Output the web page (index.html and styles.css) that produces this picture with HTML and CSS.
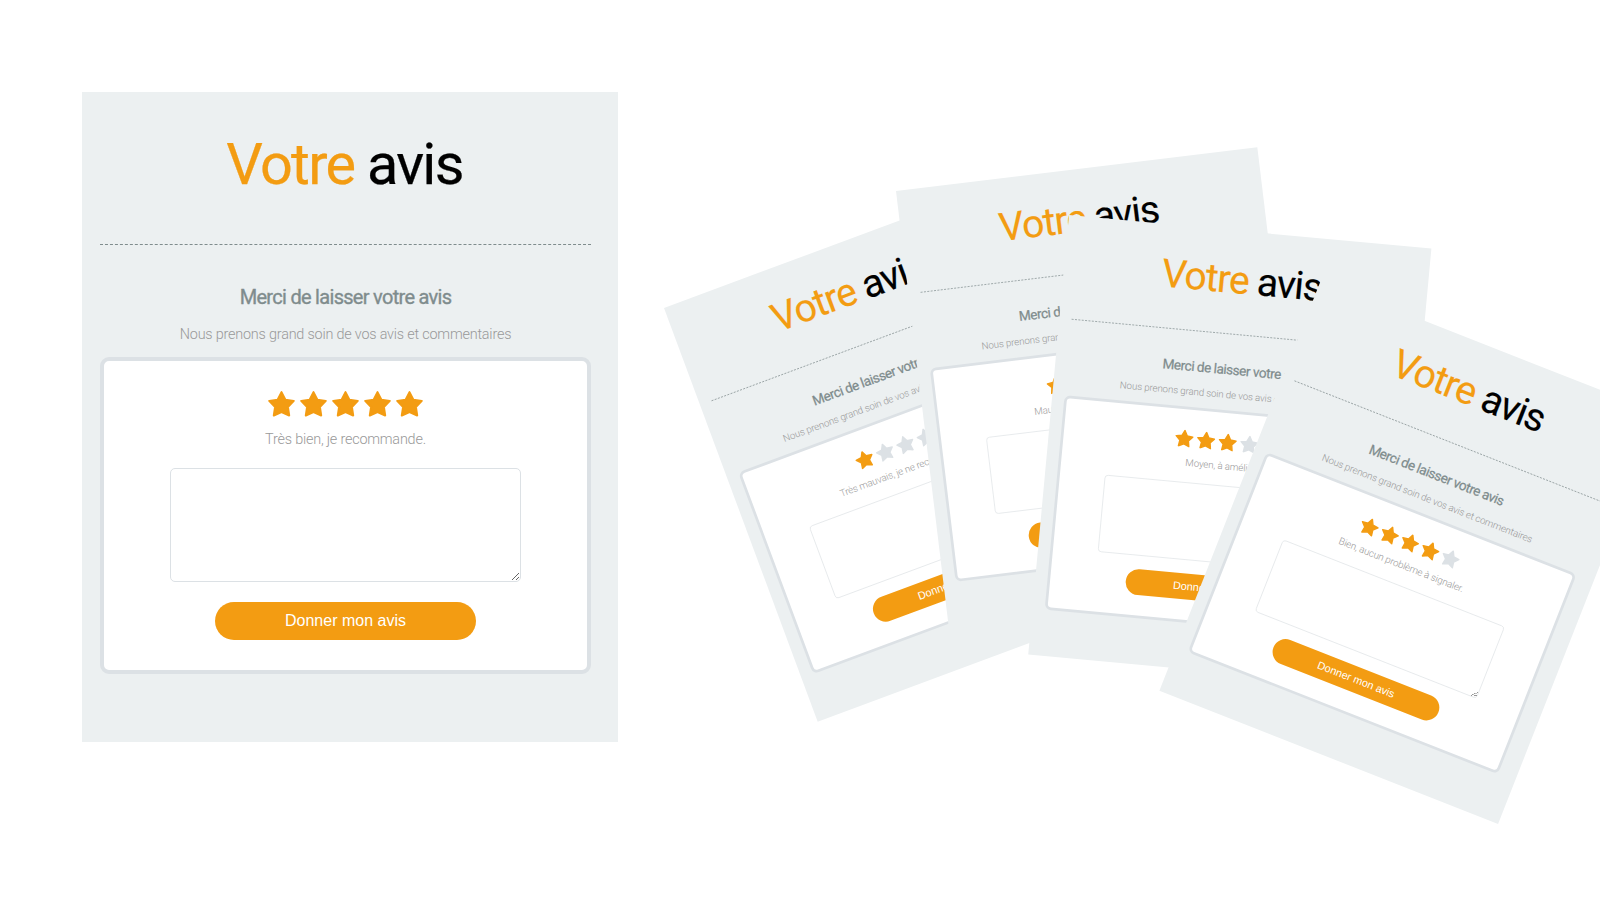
FILE: index.html
```html
<!DOCTYPE html>
<html lang="fr">
<head>
<meta charset="utf-8">
<title>Votre avis</title>
<link rel="stylesheet" href="styles.css">
</head>
<body>
<svg class="sprite" aria-hidden="true">
  <symbol id="star" viewBox="0 0 29 26">
    <path d="M14.5 1.1L18.4 8.7L26.8 9.9L20.9 16L22.2 24.5L14.5 21L6.8 24.5L8.1 16L2.2 9.9L10.6 8.7Z"/>
  </symbol>
</svg>
<main class="stage">
  <section class="card card-main">
    <h1 class="title"><span class="accent">Votre</span> avis</h1>
    <h2 class="subtitle">Merci de laisser votre avis</h2>
    <p class="note">Nous prenons grand soin de vos avis et commentaires</p>
    <form class="panel">
      <div class="stars">
        <svg class="star on"><use href="#star"/></svg><svg class="star on"><use href="#star"/></svg><svg class="star on"><use href="#star"/></svg><svg class="star on"><use href="#star"/></svg><svg class="star on"><use href="#star"/></svg>
      </div>
      <p class="rating">Très bien, je recommande.</p>
      <textarea class="comment"></textarea>
      <button class="submit" type="button">Donner mon avis</button>
    </form>
  </section>

  <section class="card fan fan-1">
    <h1 class="title"><span class="accent">Votre</span> avis</h1>
    <h2 class="subtitle">Merci de laisser votre avis</h2>
    <p class="note">Nous prenons grand soin de vos avis et commentaires</p>
    <form class="panel">
      <div class="stars">
        <svg class="star on"><use href="#star"/></svg><svg class="star"><use href="#star"/></svg><svg class="star"><use href="#star"/></svg><svg class="star"><use href="#star"/></svg><svg class="star"><use href="#star"/></svg>
      </div>
      <p class="rating">Très mauvais, je ne recommande pas.</p>
      <textarea class="comment"></textarea>
      <button class="submit" type="button">Donner mon avis</button>
    </form>
  </section>

  <section class="card fan fan-2">
    <h1 class="title"><span class="accent">Votre</span> avis</h1>
    <h2 class="subtitle">Merci de laisser votre avis</h2>
    <p class="note">Nous prenons grand soin de vos avis et commentaires</p>
    <form class="panel">
      <div class="stars">
        <svg class="star on"><use href="#star"/></svg><svg class="star on"><use href="#star"/></svg><svg class="star"><use href="#star"/></svg><svg class="star"><use href="#star"/></svg><svg class="star"><use href="#star"/></svg>
      </div>
      <p class="rating">Mauvais, je ne recommande pas.</p>
      <textarea class="comment"></textarea>
      <button class="submit" type="button">Donner mon avis</button>
    </form>
  </section>

  <section class="card fan fan-3">
    <h1 class="title"><span class="accent">Votre</span> avis</h1>
    <h2 class="subtitle">Merci de laisser votre avis</h2>
    <p class="note">Nous prenons grand soin de vos avis et commentaires</p>
    <form class="panel">
      <div class="stars">
        <svg class="star on"><use href="#star"/></svg><svg class="star on"><use href="#star"/></svg><svg class="star on"><use href="#star"/></svg><svg class="star"><use href="#star"/></svg><svg class="star"><use href="#star"/></svg>
      </div>
      <p class="rating">Moyen, à améliorer.</p>
      <textarea class="comment"></textarea>
      <button class="submit" type="button">Donner mon avis</button>
    </form>
  </section>

  <section class="card fan fan-4">
    <h1 class="title"><span class="accent">Votre</span> avis</h1>
    <h2 class="subtitle">Merci de laisser votre avis</h2>
    <p class="note">Nous prenons grand soin de vos avis et commentaires</p>
    <form class="panel">
      <div class="stars">
        <svg class="star on"><use href="#star"/></svg><svg class="star on"><use href="#star"/></svg><svg class="star on"><use href="#star"/></svg><svg class="star on"><use href="#star"/></svg><svg class="star"><use href="#star"/></svg>
      </div>
      <p class="rating">Bien, aucun problème à signaler.</p>
      <textarea class="comment"></textarea>
      <button class="submit" type="button">Donner mon avis</button>
    </form>
  </section>
</main>
</body>
</html>
```
FILE: styles.css
```css
* { box-sizing: border-box; }

body {
  margin: 0;
  background: #fff;
  font-family: Roboto, sans-serif;
}

.sprite { display: none; }

.stage {
  position: relative;
  width: 1600px;
  height: 900px;
  padding: 92px 0 0 82px;
  overflow: hidden;
}

.card {
  display: flex;
  flex-direction: column;
  width: 536px;
  height: 650px;
  padding: 0 27px 0 18px;
  background: #ecf0f1;
  text-align: center;
}

.title {
  height: 153px;
  margin: 0;
  padding: 39px 2px 0 0;
  border-bottom: 1px dashed #7f8c8d;
  font-size: 57.6px;
  line-height: 68px;
  font-weight: 400;
  letter-spacing: -1.7px;
  -webkit-text-stroke: 0.25px currentColor;
  color: #000;
  white-space: nowrap;
}

.accent { color: #f39c12; }

.subtitle {
  margin: 40px 0 0;
  font-size: 20px;
  line-height: 24px;
  font-weight: 400;
  letter-spacing: -0.7px;
  -webkit-text-stroke: 0.35px currentColor;
  color: #7f8c8d;
}

.note,
.rating {
  font-size: 14.4px;
  line-height: 18px;
  font-weight: 300;
  letter-spacing: -0.2px;
  color: #999;
  white-space: nowrap;
}

.note { margin: 17px 0 0; }

.panel {
  display: flex;
  flex-direction: column;
  align-items: center;
  height: 317px;
  margin: 13px 0 0;
  padding-top: 30px;
  border: 4px solid #dce1e5;
  border-radius: 9px;
  background: #fff;
}

.stars {
  display: flex;
  gap: 3px;
}

.star {
  width: 29px;
  height: 26px;
  fill: #dce1e5;
  stroke: #dce1e5;
  stroke-width: 2px;
  stroke-linejoin: round;
}

.star.on {
  fill: #f39c12;
  stroke: #f39c12;
}

.rating { margin: 14px 0 0; }

.comment {
  width: 351px;
  height: 114px;
  margin: 19px 0 20px;
  border: 1px solid #dce1e5;
  border-radius: 5px;
  background: #fff;
  flex: none;
}

.submit {
  width: 261px;
  height: 38px;
  padding: 0;
  border: 0;
  border-radius: 19px;
  background: #f39c12;
  color: #fff;
  font: 16px "Liberation Sans", Arial, sans-serif;
}

/* Fan of scaled previews, each placed by its top-left corner */
.fan {
  position: absolute;
  transform-origin: 0 0;
}

.fan .comment { border-color: #dfe3e6; }

.fan-1 { left: 663.5px; top: 308px; transform: rotate(-20.38deg) scale(0.679); }
.fan-2 { left: 896px; top: 190.6px; transform: rotate(-6.9deg) scale(0.679); }
.fan-3 { left: 1069px; top: 215px; transform: rotate(5.3deg) scale(0.679); }
.fan-4 { left: 1320.6px; top: 280px; transform: rotate(21.48deg) scale(0.679); }
```
